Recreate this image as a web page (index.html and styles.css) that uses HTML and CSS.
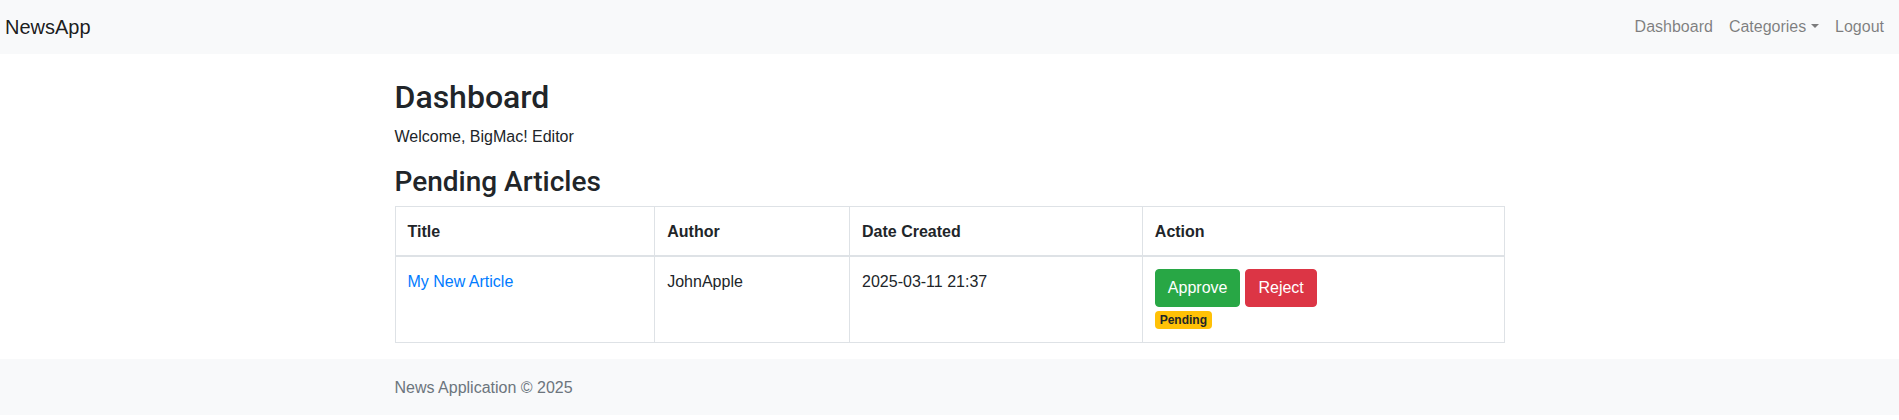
FILE: index.html
```html
<!DOCTYPE html>
<html lang="en">
<head>
<meta charset="utf-8">
<title>NewsApp</title>
<link rel="stylesheet" href="styles.css">
</head>
<body>
<nav class="navbar">
  <a class="brand" href="#">NewsApp</a>
  <ul class="nav">
    <li><a class="nav-link" href="#">Dashboard</a></li>
    <li><a class="nav-link dropdown-toggle" href="#">Categories</a></li>
    <li><a class="nav-link" href="#">Logout</a></li>
  </ul>
</nav>

<main class="container main">
  <h2 class="title">Dashboard</h2>
  <p class="welcome">Welcome, BigMac! Editor</p>
  <h3 class="subtitle">Pending Articles</h3>
  <table class="table">
    <thead>
      <tr>
        <th class="col-title">Title</th>
        <th class="col-author">Author</th>
        <th class="col-date">Date Created</th>
        <th class="col-action">Action</th>
      </tr>
    </thead>
    <tbody>
      <tr>
        <td><a class="link" href="#">My New Article</a></td>
        <td>JohnApple</td>
        <td>2025-03-11 21:37</td>
        <td>
          <div class="actions">
            <button class="btn btn-success" type="button">Approve</button>
            <button class="btn btn-danger" type="button">Reject</button>
          </div>
          <div class="status"><span class="badge">Pending</span></div>
        </td>
      </tr>
    </tbody>
  </table>
</main>

<footer class="footer">
  <div class="container">
    <span class="footer-text">News Application © 2025</span>
  </div>
</footer>
</body>
</html>
```

FILE: styles.css
```css
* {
  box-sizing: border-box;
}

html, body {
  margin: 0;
  padding: 0;
}

body {
  font-family: "Liberation Sans", Arial, sans-serif;
  font-size: 16px;
  line-height: 1.5;
  color: #212529;
  background: #fff;
}

a {
  text-decoration: none;
}

.navbar {
  height: 54px;
  background: #f8f9fa;
  display: flex;
  align-items: center;
  justify-content: space-between;
  padding: 0 7px 0 5px;
}

.brand {
  font-size: 20px;
  line-height: 30px;
  color: rgba(0, 0, 0, 0.9);
}

.nav {
  list-style: none;
  margin: 0;
  padding: 0;
  display: flex;
  align-items: center;
}

.nav-link {
  display: block;
  padding: 0 8px;
  line-height: 24px;
  color: rgba(0, 0, 0, 0.5);
}

.dropdown-toggle::after {
  content: "";
  display: inline-block;
  margin-left: 0.3em;
  vertical-align: 0.255em;
  border-top: 0.3em solid;
  border-left: 0.3em solid transparent;
  border-right: 0.3em solid transparent;
}

.container {
  max-width: 1140px;
  margin: 0 auto;
  padding: 0 15px;
}

.main {
  padding-top: 24px;
}

.title,
.subtitle {
  font-family: Roboto, "Liberation Sans", sans-serif;
  font-weight: 500;
  line-height: 1.2;
  margin: 0 0 8px;
}

.title {
  font-size: 32px;
}

.subtitle {
  font-size: 28px;
  padding-top: 1px;
  margin-bottom: 7px;
}

.welcome {
  margin: 0 0 16px;
  padding-top: 1px;
  line-height: 23px;
}

.table {
  width: 100%;
  border-collapse: collapse;
  table-layout: fixed;
  margin-bottom: 16px;
}

.table th,
.table td {
  padding: 13px 12px 11px;
  border: 1px solid #dee2e6;
  text-align: left;
  vertical-align: top;
}

.table th {
  font-weight: 700;
  vertical-align: bottom;
  border-bottom: 2px solid #dee2e6;
}

.table td:last-child {
  padding-top: 12px;
  padding-bottom: 13px;
}

.col-title { width: 23.42%; }
.col-author { width: 17.57%; }
.col-date { width: 26.4%; }
.col-action { width: 32.61%; }

.link {
  color: #007bff;
}

.actions {
  display: flex;
  gap: 5px;
}

.btn {
  font-family: inherit;
  font-size: 16px;
  line-height: 24px;
  padding: 6px 12px;
  border: 1px solid transparent;
  border-radius: 4px;
  color: #fff;
  cursor: pointer;
}

.btn-success {
  background: #28a745;
  border-color: #28a745;
}

.btn-danger {
  background: #dc3545;
  border-color: #dc3545;
}

.status {
  display: flex;
  margin-top: 4px;
}

.badge {
  display: inline-block;
  font-size: 12px;
  font-weight: 700;
  line-height: 1;
  padding: 3px 4.8px;
  border-radius: 4px;
  background: #ffc107;
  color: #212529;
}

.footer {
  background: #f8f9fa;
  padding: 17px 0 15px;
}

.footer-text {
  color: #6c757d;
}
```
